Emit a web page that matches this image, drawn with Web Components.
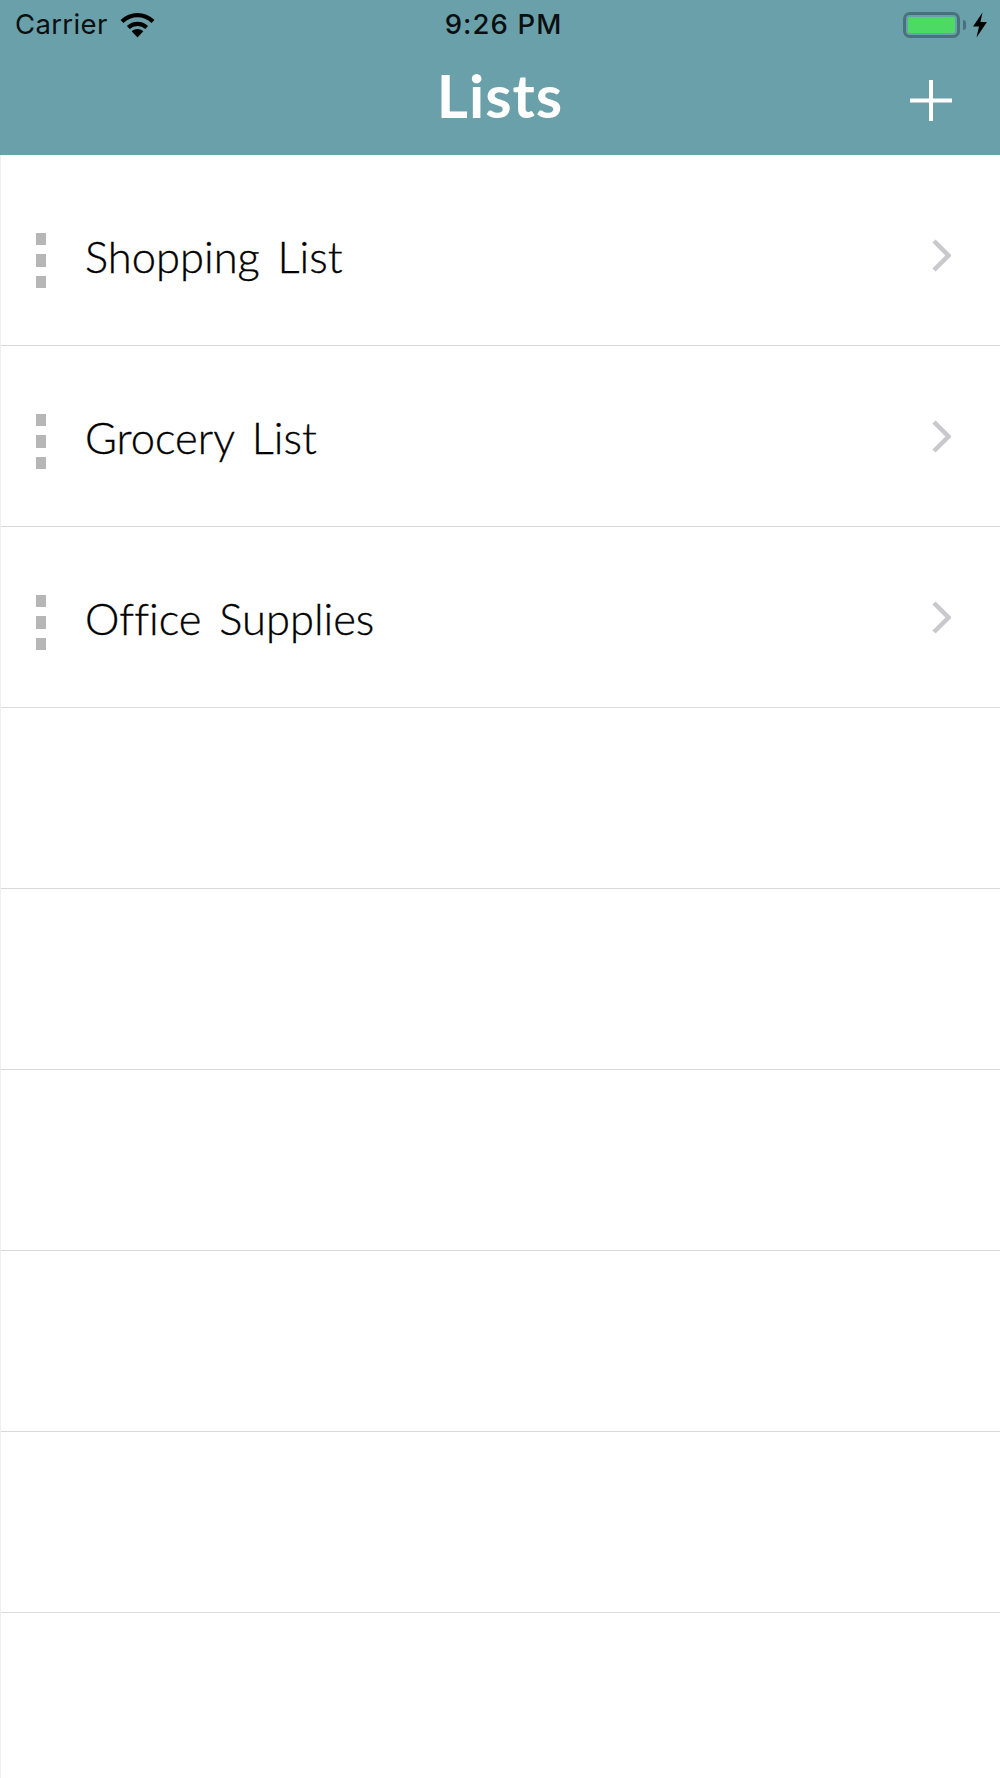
<!DOCTYPE html>
<html><head><meta charset="utf-8"><style>
html,body{margin:0;padding:0;background:#fff}
body{width:1000px;height:1778px;overflow:hidden}
</style></head><body>
<app-screen>
  <status-bar></status-bar>
  <nav-bar title="Lists"></nav-bar>
  <list-view>
    <list-row label="Shopping List"></list-row>
    <list-row label="Grocery List"></list-row>
    <list-row label="Office Supplies"></list-row>
    <list-row></list-row><list-row></list-row><list-row></list-row><list-row></list-row><list-row></list-row>
    <list-row last></list-row>
  </list-view>
</app-screen>
<script>
function def(name, html, init){
  customElements.define(name, class extends HTMLElement{
    connectedCallback(){
      if(this.shadowRoot) return;
      const r=this.attachShadow({mode:'open'});
      r.innerHTML=html;
      if(init) init(this,r);
    }
  });
}
def('app-screen',`<style>:host{display:flex;flex-direction:column;width:1000px;height:1778px;background:#fff}</style><slot></slot>`);
def('status-bar',`<style>
:host{display:grid;grid-template-columns:1fr auto 1fr;align-items:center;height:50px;background:#6aa0a9;color:#0a0f12;font:400 27.5px/1 Inter,"Liberation Sans",sans-serif;padding:0 12px 0 15px;box-sizing:border-box}
.l{display:flex;align-items:center;gap:12px}
.l span{letter-spacing:.35px}
.t{font-weight:500;font-size:27.5px;letter-spacing:1.1px;padding-left:4px}
.r{display:flex;justify-content:flex-end;align-items:center;gap:6px}
.batt{display:flex;align-items:center;gap:3px}
.shell{width:57px;height:26px;box-sizing:border-box;border:3px solid #47727c;border-radius:7px;padding:2px}
.fill{height:100%;background:#4cd964;border-radius:2px}
.nub{width:3px;height:10px;background:#47727c;border-radius:0 3px 3px 0}
svg{display:block}
</style>
<div class="l"><span>Carrier</span><svg width="35" height="26" viewBox="0 0 35 26"><path d="M2 9.5C11 1 24 1 33 9.5" fill="none" stroke="#000" stroke-width="4.2"/><path d="M8.3 15.5C13.5 10.6 21.5 10.6 26.7 15.5" fill="none" stroke="#000" stroke-width="4.2"/><path d="M11.7 19.2C15 16.2 20 16.2 23.3 19.2L17.5 25.5Z" fill="#000"/></svg></div>
<div class="t">9:26 PM</div>
<div class="r"><div class="batt"><div class="shell"><div class="fill"></div></div><div class="nub"></div></div><svg width="16" height="26" viewBox="0 0 16 26"><path d="M10.5 0.5L1 14.5H7L4.5 25.5L15 10H8.5Z" fill="#000"/></svg></div>`);
def('nav-bar',`<style>
:host{display:flex;align-items:center;justify-content:center;position:relative;height:105px;background:#6aa0a9;box-sizing:border-box;padding-bottom:16px;color:#fff}
h1{margin:0;font:700 60px/1 Lato,"Open Sans",sans-serif;letter-spacing:1px}
svg{position:absolute;left:910px;top:30px;display:block}
</style><h1></h1><svg width="42" height="41" viewBox="0 0 42 41"><path d="M21 0V41M0 20.5H42" stroke="#fff" stroke-width="4" fill="none"/></svg>`,
(h,r)=>{r.querySelector('h1').textContent=h.getAttribute('title')});
def('list-view',`<style>:host{display:flex;flex-direction:column;flex:1;padding-top:10px;border-left:1px solid #eee;min-height:0}</style><slot></slot>`);
def('list-row',`<style>
:host{display:flex;align-items:center;flex:0 0 181px;box-sizing:border-box;border-bottom:1px solid #d9d9d9;padding:0 49px 0 35px;color:#000;font:300 43.5px/1 Lato,"Open Sans",sans-serif;word-spacing:6px;font-variant-ligatures:none;-webkit-text-stroke:.35px #000}
:host([last]){flex:1;border-bottom:0}
.grip{display:flex;flex-direction:column;gap:9px;width:10px;margin:11px 39px 0 0}
.grip i{display:block;height:12.5px;background:#b6b6b6}
.label{flex:1;padding-top:4px}
svg{display:block;margin-top:0}
</style><div class="grip"><i></i><i></i><i></i></div><span class="label"></span><svg width="19" height="33" viewBox="0 0 19 33"><path d="M2 2L16.5 16.5L2 31" fill="none" stroke="#c8c8cd" stroke-width="4.5"/></svg>`,
(h,r)=>{
  if(h.hasAttribute('label')) r.querySelector('.label').textContent=h.getAttribute('label');
  else { r.querySelector('.grip').remove(); r.querySelector('svg').remove(); }
});
</script>
</body></html>
